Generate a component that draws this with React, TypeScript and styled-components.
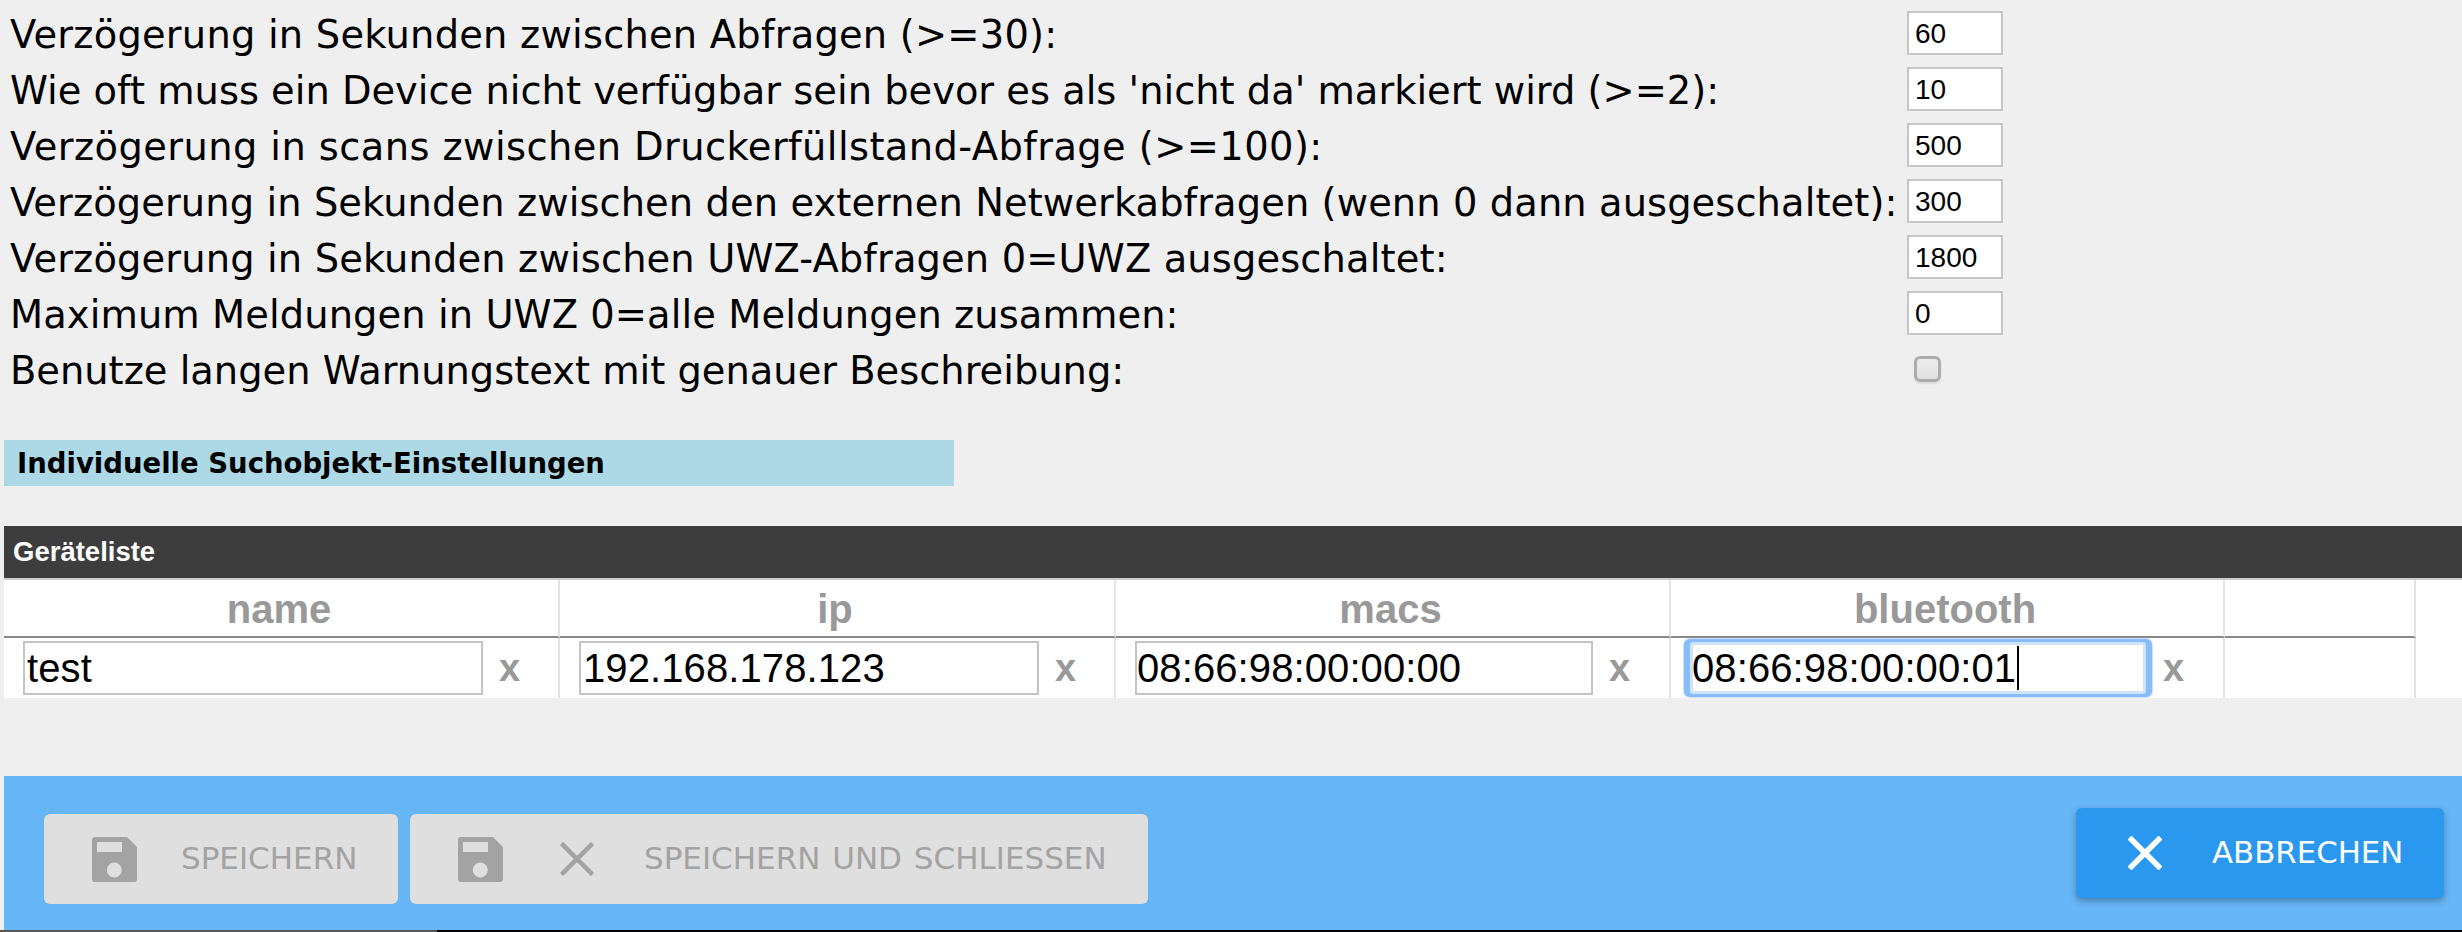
import React from "react";
import styled, { createGlobalStyle } from "styled-components";

const Global = createGlobalStyle`
  html, body { margin: 0; padding: 0; background: #efefef; }
  body { font-family: "DejaVu Sans", sans-serif; overflow: hidden; }
  * { box-sizing: border-box; }
`;

const Page = styled.div`
  width: 2462px;
  height: 932px;
  display: flex;
  flex-direction: column;
  overflow: hidden;
`;

const Settings = styled.div`
  padding-top: 5px;
  display: flex;
  flex-direction: column;
`;

const SettingRow = styled.label`
  height: 56px;
  display: grid;
  grid-template-columns: 1907px 96px;
  align-items: center;
`;

const SettingLabel = styled.span<{ $spacing?: number }>`
  padding: 4px 0 0 10px;
  font-size: 38.4px;
  line-height: 52px;
  letter-spacing: ${(p) => p.$spacing ?? 0}px;
  color: #000;
  white-space: nowrap;
`;

const SmallInput = styled.input`
  width: 96px;
  height: 44px;
  border: 2px solid #c6c6c6;
  background: #fff;
  padding: 2px 0 0 6px;
  font: 28px "Liberation Sans", Arial, sans-serif;
  color: #000;
  outline: none;
`;

const Check = styled.input`
  appearance: none;
  margin: 0 0 0 7px;
  width: 27px;
  height: 26px;
  border: 3px solid #acacac;
  border-radius: 6px;
  background: linear-gradient(#ededed, #e0e0e0);
  box-shadow: 0 2px 2px rgba(0, 0, 0, 0.08);
`;

const SectionTitle = styled.div`
  margin: 43px 0 0 4px;
  width: 950px;
  height: 46px;
  padding-left: 13px;
  background: #add8e6;
  font-size: 27.5px;
  font-weight: bold;
  line-height: 46px;
  color: #000;
  white-space: nowrap;
`;

const Table = styled.div`
  margin: 40px 0 0 4px;
  display: flex;
  flex-direction: column;
`;

const TableTitle = styled.div`
  height: 52px;
  padding-left: 9px;
  background: #3d3d3d;
  color: #fff;
  font: bold 27.5px/52px "Liberation Sans", Arial, sans-serif;
`;

const Columns = "556px 556px 555px 554px 191px 1fr";

const HeadRow = styled.div`
  display: grid;
  grid-template-columns: ${Columns};
  height: 60px;
  border-top: 2px solid #cccccc;
  background: #fff;
`;

const HeadCell = styled.div<{ $plain?: boolean }>`
  height: 58px;
  padding-right: 4px;
  border-right: ${(p) => (p.$plain ? "0" : "2px solid #e4e4e4")};
  border-bottom: ${(p) => (p.$plain ? "0" : "2px solid #888888")};
  text-align: center;
  font: bold 40px/58px "Liberation Sans", Arial, sans-serif;
  color: #999999;
`;

const BodyRow = styled.div`
  display: grid;
  grid-template-columns: ${Columns};
  height: 60px;
  background: #fff;
`;

const BodyCell = styled.div<{ $plain?: boolean }>`
  position: relative;
  display: flex;
  align-items: flex-start;
  padding: 3px 0 0 19px;
  border-right: ${(p) => (p.$plain ? "0" : "2px solid #e4e4e4")};
`;

const TextInput = styled.input<{ $width: number; $indent: number; $focused?: boolean }>`
  width: ${(p) => p.$width}px;
  height: ${(p) => (p.$focused ? 52 : 54)}px;
  margin-top: ${(p) => (p.$focused ? 1 : 0)}px;
  border: ${(p) => (p.$focused ? "3px solid #cfe3fb" : "2px solid #c4c4c4")};
  padding: 0;
  text-indent: ${(p) => p.$indent}px;
  background: #fff;
  font: 40px "Liberation Sans", Arial, sans-serif;
  letter-spacing: 0.1px;
  color: #000;
  outline: none;
  border-radius: ${(p) => (p.$focused ? 3 : 0)}px;
  box-shadow: ${(p) =>
    p.$focused
      ? "0 0 0 3px #87bdf8, -3px 0 0 3px #87bdf8, 3px 0 0 3px #87bdf8, -3px 0 0 4px #cfe3fb, 3px 0 0 4px #cfe3fb"
      : "none"};
`;

const Caret = styled.span`
  position: absolute;
  left: 346px;
  top: 8px;
  width: 2px;
  height: 44px;
  background: #000;
`;

const Remove = styled.span<{ $focused?: boolean }>`
  margin-left: ${(p) => (p.$focused ? 17 : 16)}px;
  font: bold 38px/54px "Liberation Sans", Arial, sans-serif;
  color: #999999;
`;

const Footer = styled.div`
  margin: 78px 0 0 4px;
  height: 154px;
  padding: 0 18px 0 40px;
  background: #66b5f5;
  display: flex;
  justify-content: space-between;
  align-items: flex-start;
`;

const ButtonGroup = styled.div`
  margin-top: 38px;
  display: flex;
  gap: 12px;
`;

const DisabledButton = styled.div<{ $width: number }>`
  width: ${(p) => p.$width}px;
  height: 90px;
  padding-left: 48px;
  border-radius: 6px;
  background: #dfdfdf;
  color: #a3a3a3;
  display: flex;
  align-items: center;
  font-size: 31px;
  word-spacing: 2px;
  white-space: nowrap;
`;

const IconSlot = styled.span<{ $gap: number }>`
  display: flex;
  margin-left: ${(p) => p.$gap}px;
`;

const ButtonLabel = styled.span<{ $gap: number }>`
  margin-left: ${(p) => p.$gap}px;
  padding-bottom: 2px;
`;

const CancelButton = styled.div`
  margin-top: 32px;
  width: 368px;
  height: 90px;
  padding-left: 52px;
  border-radius: 6px;
  background: #2b98f0;
  color: #fff;
  display: flex;
  align-items: center;
  font-size: 30.8px;
  box-shadow: 0 3px 6px rgba(0, 0, 0, 0.28);
`;

const BottomEdge = styled.div`
  height: 2px;
  background: #000;
`;

const EdgeSegment = styled.div`
  width: 437px;
  height: 2px;
  background: #555;
`;

const SaveIcon = () => (
  <svg width="45" height="45" viewBox="0 0 45 45" style={{ flex: "none" }}>
    <path
      fillRule="evenodd"
      fill="#a3a3a3"
      d="M3 0H35L45 10V42a3 3 0 0 1-3 3H3a3 3 0 0 1-3-3V3a3 3 0 0 1 3-3ZM5 5V15H30V5ZM22.3 25.5a7.5 7.5 0 1 0 0 15a7.5 7.5 0 1 0 0-15Z"
    />
  </svg>
);

const CloseIcon = ({ color, width }: { color: string; width: number }) => (
  <svg width="34" height="34" viewBox="0 0 34 34" style={{ flex: "none" }}>
    <path d="M1.5 1.5L32.5 32.5M32.5 1.5L1.5 32.5" stroke={color} strokeWidth={width} fill="none" />
  </svg>
);

const settings = [
  { label: "Verzögerung in Sekunden zwischen Abfragen (>=30):", value: "60", spacing: 0.22 },
  { label: "Wie oft muss ein Device nicht verfügbar sein bevor es als 'nicht da' markiert wird (>=2):", value: "10", spacing: 0 },
  { label: "Verzögerung in scans zwischen Druckerfüllstand-Abfrage (>=100):", value: "500", spacing: 0.42 },
  { label: "Verzögerung in Sekunden zwischen den externen Netwerkabfragen (wenn 0 dann ausgeschaltet):", value: "300", spacing: 0.09 },
  { label: "Verzögerung in Sekunden zwischen UWZ-Abfragen 0=UWZ ausgeschaltet:", value: "1800", spacing: 0.14 },
  { label: "Maximum Meldungen in UWZ 0=alle Meldungen zusammen:", value: "0", spacing: 0.09 },
];

const fields = [
  { value: "test", width: 460, indent: 2 },
  { value: "192.168.178.123", width: 460, indent: 2 },
  { value: "08:66:98:00:00:00", width: 458, indent: 0 },
  { value: "08:66:98:00:00:01", width: 456, indent: -1, focused: true },
];

export default function App() {
  return (
    <Page>
      <Global />
      <Settings>
        {settings.map((s) => (
          <SettingRow key={s.label}>
            <SettingLabel $spacing={s.spacing}>{s.label}</SettingLabel>
            <SmallInput defaultValue={s.value} />
          </SettingRow>
        ))}
        <SettingRow>
          <SettingLabel>Benutze langen Warnungstext mit genauer Beschreibung:</SettingLabel>
          <Check type="checkbox" />
        </SettingRow>
      </Settings>
      <SectionTitle>Individuelle Suchobjekt-Einstellungen</SectionTitle>
      <Table>
        <TableTitle>Geräteliste</TableTitle>
        <HeadRow>
          <HeadCell>name</HeadCell>
          <HeadCell>ip</HeadCell>
          <HeadCell>macs</HeadCell>
          <HeadCell>bluetooth</HeadCell>
          <HeadCell />
          <HeadCell $plain />
        </HeadRow>
        <BodyRow>
          {fields.map((f) => (
            <BodyCell key={f.value}>
              <TextInput defaultValue={f.value} $width={f.width} $indent={f.indent} $focused={f.focused} />
              {f.focused && <Caret />}
              <Remove $focused={f.focused}>x</Remove>
            </BodyCell>
          ))}
          <BodyCell />
          <BodyCell $plain />
        </BodyRow>
      </Table>
      <Footer>
        <ButtonGroup>
          <DisabledButton $width={354}>
            <SaveIcon />
            <ButtonLabel $gap={44}>SPEICHERN</ButtonLabel>
          </DisabledButton>
          <DisabledButton $width={738}>
            <SaveIcon />
            <IconSlot $gap={57}>
              <CloseIcon color="#a3a3a3" width={4.5} />
            </IconSlot>
            <ButtonLabel $gap={50}>SPEICHERN UND SCHLIESSEN</ButtonLabel>
          </DisabledButton>
        </ButtonGroup>
        <CancelButton>
          <CloseIcon color="#ffffff" width={5.5} />
          <ButtonLabel $gap={50}>ABBRECHEN</ButtonLabel>
        </CancelButton>
      </Footer>
      <BottomEdge>
        <EdgeSegment />
      </BottomEdge>
    </Page>
  );
}
